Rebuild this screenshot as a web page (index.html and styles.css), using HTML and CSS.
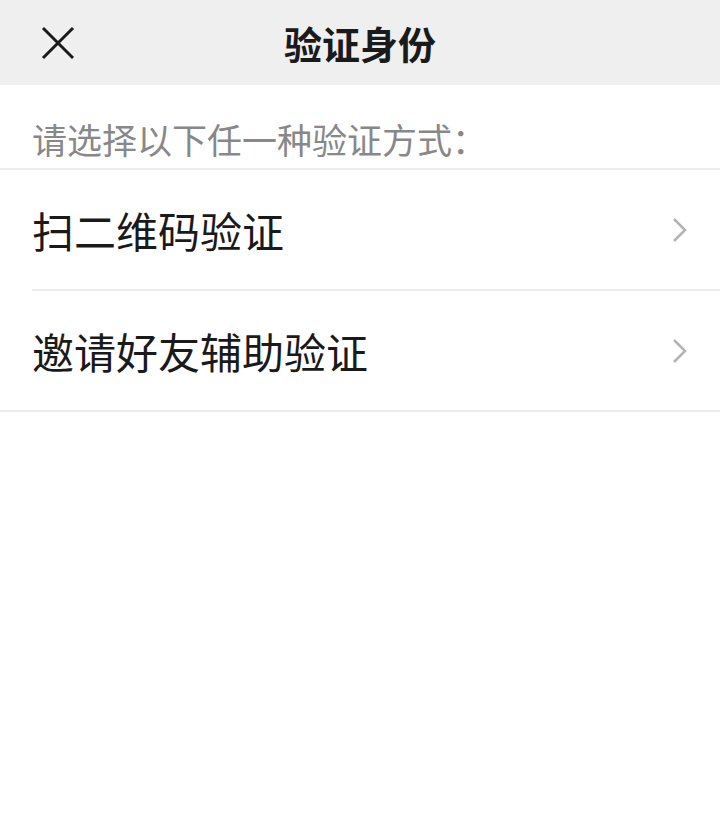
FILE: index.html
```html
<!DOCTYPE html>
<html lang="zh-CN">
<head>
  <meta charset="UTF-8">
  <meta name="viewport" content="width=device-width, initial-scale=1.0">
  <title>验证身份</title>
  <link rel="stylesheet" href="styles.css">
</head>
<body>
  <div class="header">
    <span class="close-btn">
      <svg width="36" height="36" viewBox="0 0 36 36">
        <path d="M3 3 L33 33 M33 3 L3 33" stroke="#1a1a1a" stroke-width="3" fill="none"/>
      </svg>
    </span>
    <h1>验证身份</h1>
  </div>

  <div class="tip">请选择以下任一种验证方式：</div>

  <div class="menu">
    <div class="menu-item">
      <span>扫二维码验证</span>
      <svg class="arrow" width="16" height="26" viewBox="0 0 16 26">
        <path d="M2 2 L13 13 L2 24" stroke="#b3b3b3" stroke-width="2.5" fill="none"/>
      </svg>
    </div>
    <div class="menu-item">
      <span>邀请好友辅助验证</span>
      <svg class="arrow" width="16" height="26" viewBox="0 0 16 26">
        <path d="M2 2 L13 13 L2 24" stroke="#b3b3b3" stroke-width="2.5" fill="none"/>
      </svg>
    </div>
  </div>
</body>
</html>
```

FILE: styles.css
```css
body {
  margin: 0;
  background-color: #fff;
  font-family: "Noto Sans CJK SC", "Noto Sans", sans-serif;
}

.header {
  position: relative;
  height: 85px;
  background-color: #efefef;
  display: flex;
  align-items: center;
  justify-content: center;
}

.header h1 {
  margin: 0;
  font-size: 38px;
  font-weight: bold;
  color: #1a1a1a;
  line-height: 1;
}

.close-btn {
  position: absolute;
  left: 40px;
  top: 25px;
  width: 36px;
  height: 36px;
}

.tip {
  height: 85px;
  box-sizing: border-box;
  padding: 0 32px 12px;
  display: flex;
  align-items: flex-end;
  font-size: 35px;
  line-height: 1;
  color: #888;
  border-bottom: 2px solid #ececec;
}

.menu {
  border-bottom: 2px solid #ececec;
}

.menu-item {
  height: 119px;
  margin-left: 32px;
  padding-right: 32px;
  display: flex;
  align-items: center;
  justify-content: space-between;
  font-size: 42px;
  color: #1a1a1a;
}

.menu-item + .menu-item {
  border-top: 2px solid #ececec;
}
```
